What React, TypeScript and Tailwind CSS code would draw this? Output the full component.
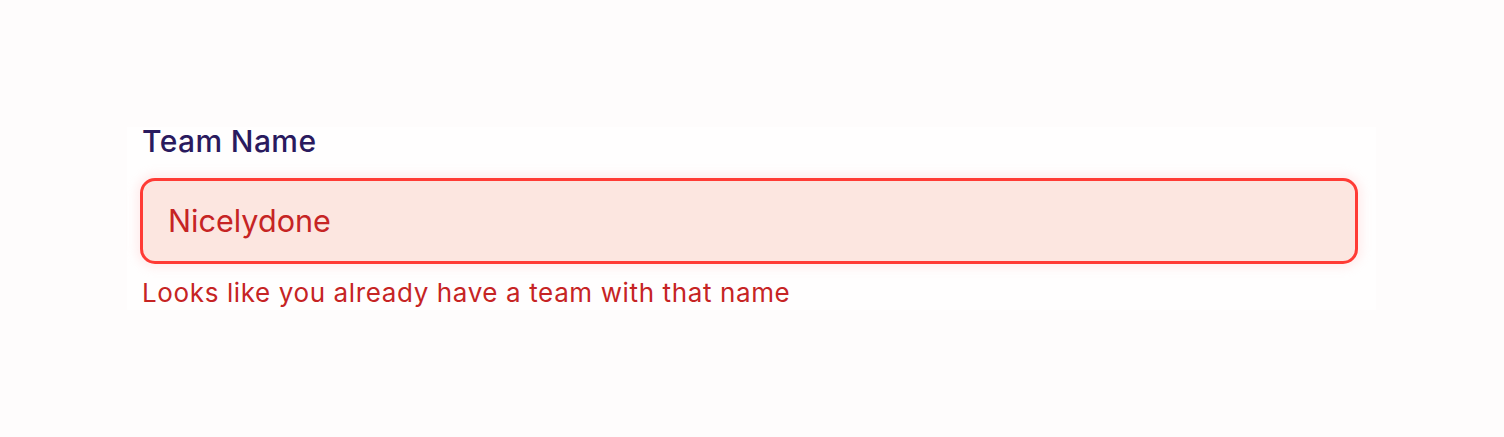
import React from "react";

export default function App() {
  return (
    <div className="w-[1504px] h-[437px] bg-[#fefcfc] pt-[127px] pl-[127px]" style={{ fontFamily: "Inter, 'Noto Sans', sans-serif" }}>
      <div className="w-[1249px] h-[183px] bg-[#fffefe] pl-[13px] flex flex-col">
        <label className="text-[30px] leading-[28px] font-medium text-[#2a1a5e] pl-[2px] tracking-[0.4px]">Team Name</label>
        <div className="mt-[23px] w-[1218px] h-[86px] rounded-[15px] border-[3px] border-[#ff3b35] bg-[#fce6e0] flex items-center pl-[25px] shadow-[0_0_10px_4px_rgba(255,200,200,0.3)]">
          <span className="text-[30.6px] text-[#c62424]">Nicelydone</span>
        </div>
        <p className="mt-[14px] pl-[2px] text-[26px] leading-[30px] text-[#c62424] tracking-[0.62px]">Looks like you already have a team with that name</p>
      </div>
    </div>
  );
}
